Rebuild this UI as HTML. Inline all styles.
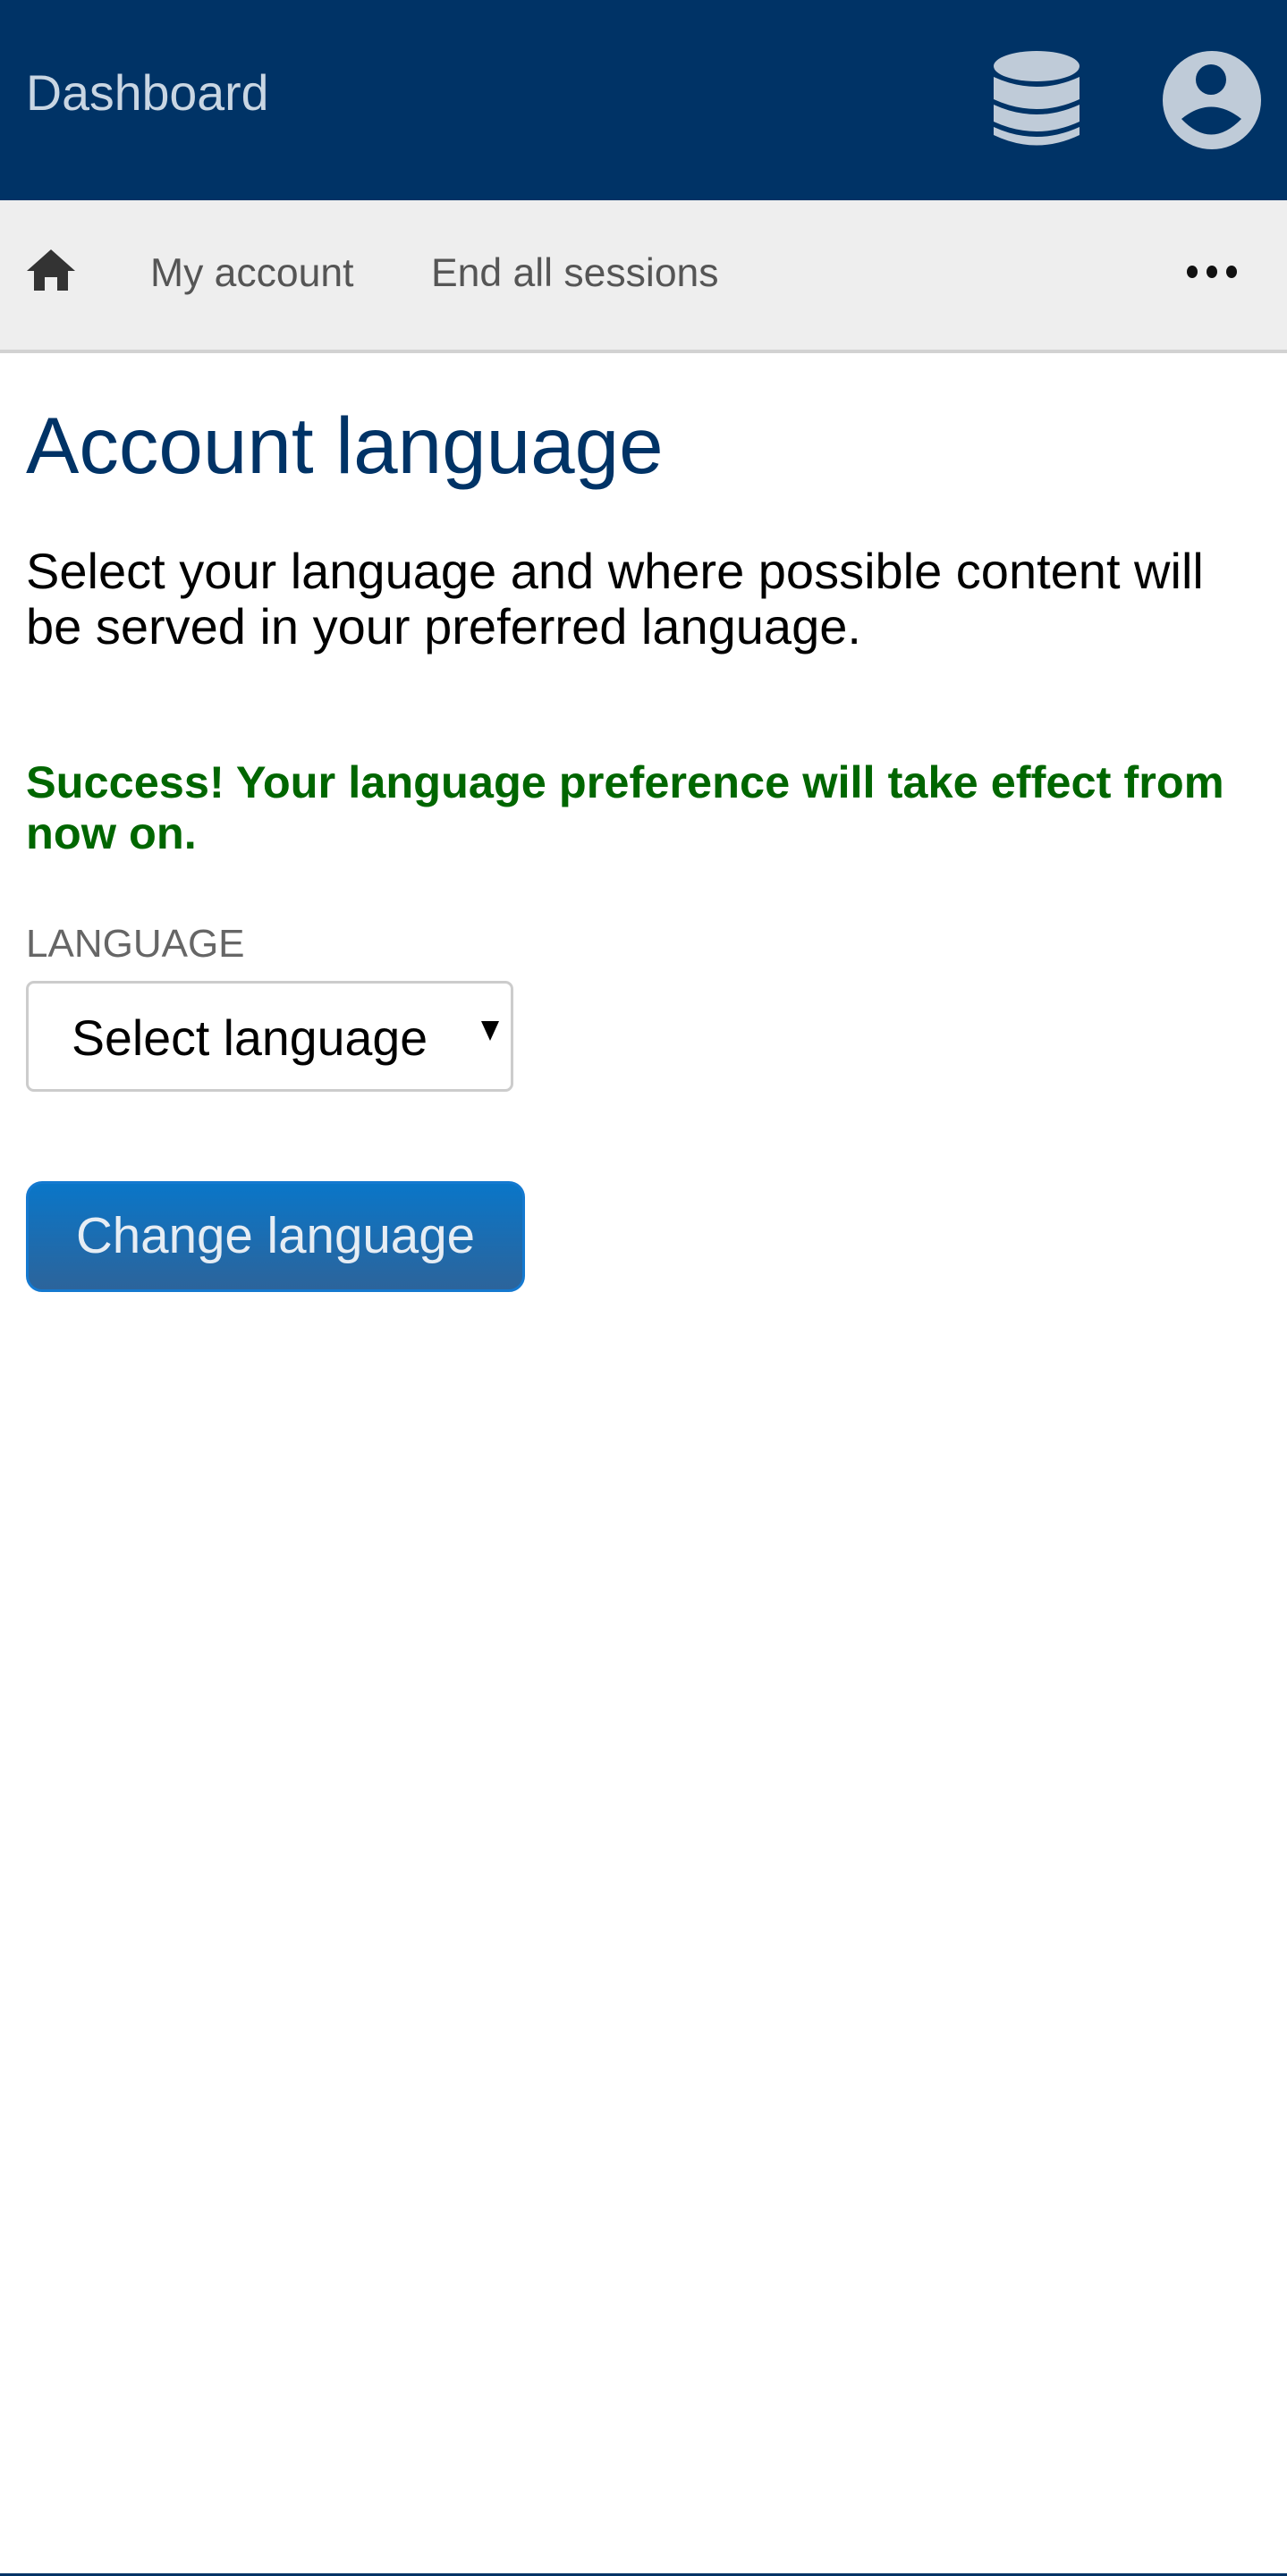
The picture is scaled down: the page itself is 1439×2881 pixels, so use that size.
<!DOCTYPE html>
<html><head><meta charset="utf-8">
<style>
*{margin:0;padding:0;box-sizing:border-box}
body{width:1439px;height:2881px;background:#fff;font-family:"Liberation Sans",Arial,sans-serif;position:relative;overflow:hidden}
.hdr{position:absolute;left:0;top:0;width:1439px;height:224px;background:#003366}
.dash{position:absolute;left:29px;top:72px;font-size:55.5px;line-height:64px;color:#c9d6e3}
.nav{position:absolute;left:0;top:224px;width:1439px;height:171px;background:#eeeeee;border-bottom:4px solid #d2d2d2}
.nl{position:absolute;top:280px;font-size:44.5px;line-height:52px;color:#555}
h1{position:absolute;left:29px;top:446px;font-size:89px;font-weight:normal;color:#003366;line-height:104px}
.p{position:absolute;left:29px;top:608px;font-size:56px;line-height:62px;color:#000;width:1400px}
.s{position:absolute;left:29px;top:846px;font-size:50.5px;line-height:57px;color:#006600;font-weight:bold;width:1400px}
.lab{position:absolute;left:29px;top:1032px;font-size:44px;line-height:48px;color:#666}
.sel{position:absolute;left:29px;top:1097px;width:545px;height:124px;border:3px solid #cccccc;border-radius:9px;background:#fff}
.sel span{position:absolute;left:48px;top:30px;font-size:55.5px;line-height:62px;color:#000}
.sel i{position:absolute;left:506px;top:42px;width:0;height:0;border-left:10px solid transparent;border-right:10px solid transparent;border-top:22px solid #000}
.btn{position:absolute;left:29px;top:1321px;width:558px;height:124px;border:3px solid #1479d0;border-radius:18px;background:linear-gradient(#0a76c8,#2c649b);color:#e6edf4;font-size:56.5px;line-height:116px;text-align:center}
.bot{position:absolute;left:0;top:2878px;width:1439px;height:3px;background:#003366}
</style></head><body>
<div class="hdr">
<div class="dash">Dashboard</div>
<svg style="position:absolute;left:1110px;top:56px" width="98" height="112" viewBox="0 0 98 112">
<g fill="#bfcbd8">
<ellipse cx="49" cy="18" rx="48" ry="17"/>
<path d="M1 30 Q49 52 97 30 V55 Q49 77 1 55Z"/>
<path d="M1 61 Q49 83 97 61 V80 Q49 102 1 80Z"/>
<path d="M1 86 Q49 108 97 86 V95 Q49 118 1 95Z"/>
</g></svg>
<svg style="position:absolute;left:1299px;top:56px" width="112" height="112" viewBox="0 0 112 112">
<circle cx="56" cy="56" r="55" fill="#bfcbd8"/>
<circle cx="55" cy="33" r="17" fill="#003366"/>
<path d="M22 77 Q55 50 89 77 Q55 112 22 77Z" fill="#003366"/>
</svg>
</div>
<div class="nav"></div>
<svg style="position:absolute;left:29px;top:277px" width="56" height="50" viewBox="0 0 56 50">
<path d="M28 2 L55 26 H47 V48 H35 V33 H21 V48 H9 V26 H1Z" fill="#333"/>
</svg>
<div class="nl" style="left:168px">My account</div>
<div class="nl" style="left:482px">End all sessions</div>
<svg style="position:absolute;left:1326px;top:296px" width="60" height="16"><g fill="#111"><ellipse cx="7" cy="8" rx="6" ry="7"/><ellipse cx="29" cy="8" rx="6" ry="7"/><ellipse cx="51" cy="8" rx="6" ry="7"/></g></svg>
<h1>Account language</h1>
<div class="p">Select your language and where possible content will<br>be served in your preferred language.</div>
<div class="s">Success! Your language preference will take effect from now on.</div>
<div class="lab">LANGUAGE</div>
<div class="sel"><span>Select language</span><i></i></div>
<div class="btn">Change language</div>
<div class="bot"></div>
</body></html>
